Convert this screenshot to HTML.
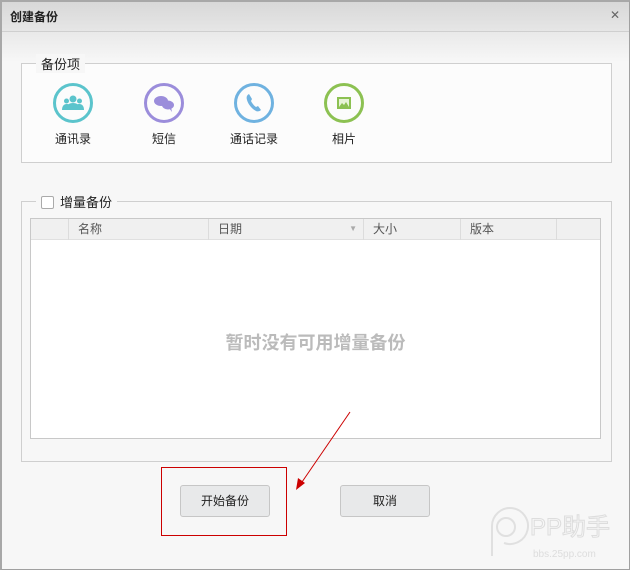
<!DOCTYPE html>
<html><head><meta charset="utf-8"><style>
*{margin:0;padding:0;box-sizing:border-box}
body{width:630px;height:570px;position:relative;overflow:hidden;background:#f7f7f7;font-family:"Liberation Sans","Noto Sans CJK SC",sans-serif;font-size:12px;color:#222}
.frame{position:absolute;left:0;top:0;width:630px;height:570px;border:1px solid #a0a0a0;border-left:2px solid #a8a8a8;border-top:2px solid #a8a8a8}
.title{position:absolute;left:2px;top:2px;right:1px;height:30px;background:linear-gradient(#d8d8d8,#e6e6e6);border-bottom:1px solid #cfcfcf}
.title span{position:absolute;left:8px;top:6px;font-size:12px;font-weight:bold}
.title .x{left:auto;right:9px;top:6px;font-weight:normal;font-size:12px;color:#666}
.grad{position:absolute;left:2px;top:32px;right:1px;height:30px;background:linear-gradient(#e9e9e9,#f7f7f7)}
.box{position:absolute;border:1px solid #cfcfcf;background:#fff}
.leg{position:absolute;background:#f7f7f7;font-size:13px;padding:0 5px}
.ic{position:absolute;width:40px;height:40px;border-radius:50%;border:3px solid}
.lbl{position:absolute;width:80px;text-align:center;font-size:12px}
.tbl{position:absolute;left:30px;top:218px;width:571px;height:221px;border:1px solid #c8c8c8;background:#fff}
.hd{position:absolute;left:0;top:0;width:100%;height:21px;background:#f0f0f0;border-bottom:1px solid #e0e0e0}
.c{position:absolute;top:0;height:21px;border-left:1px solid #dcdcdc;padding-left:9px;line-height:20px;color:#555}
.btn{position:absolute;width:90px;height:32px;border:1px solid #c6c6c6;border-radius:3px;background:#e8e9ea;text-align:center;line-height:30px;font-size:12px}
</style></head><body>
<div class="frame"></div>
<div class="title"><span>创建备份</span><span class="x">✕</span></div>
<div class="grad"></div>
<div class="box" style="left:21px;top:63px;width:591px;height:100px;background:#fcfcfc"></div>
<div class="leg" style="left:36px;top:54px">备份项</div>
<div class="ic" style="left:53px;top:83px;border-color:#5bc4cc"><svg width="34" height="34" viewBox="0 0 34 34"><g fill="#5bc4cc"><circle cx="17" cy="13" r="3.5"/><path d="M10 24c0-5 3-7 7-7s7 2 7 7z"/><circle cx="10.5" cy="15" r="2.5"/><path d="M6 24c0-4 2-6 4.5-6s3 1 3 2v4z"/><circle cx="23.5" cy="15" r="2.5"/><path d="M28 24c0-4-2-6-4.5-6s-3 1-3 2v4z"/></g></svg></div>
<div class="ic" style="left:144px;top:83px;border-color:#9b8ddb"><svg width="34" height="34" viewBox="0 0 34 34"><g fill="#9b8ddb"><ellipse cx="14" cy="15" rx="7" ry="5"/><ellipse cx="21" cy="19" rx="6" ry="4.5"/><path d="M22 22l3 4-1-5z"/></g></svg></div>
<div class="ic" style="left:234px;top:83px;border-color:#6fb2e0"><svg width="34" height="34" viewBox="0 0 34 34"><path d="M12 8c-2 1-3 3-2 6 1 4 5 9 9 11 2 1 4 0 5-1l-3-4-2 1c-2-1-4-4-5-6l1-2z" fill="#6fb2e0"/></svg></div>
<div class="ic" style="left:324px;top:83px;border-color:#8cc152"><svg width="34" height="34" viewBox="0 0 34 34"><rect x="10" y="11" width="14" height="12" fill="#8cc152"/><rect x="12" y="13" width="10" height="8" fill="#e8f4d8"/><path d="M12 21l3-4 2 2 2-3 3 5z" fill="#8cc152"/></svg></div>
<div class="lbl" style="left:33px;top:130px">通讯录</div>
<div class="lbl" style="left:124px;top:130px">短信</div>
<div class="lbl" style="left:214px;top:130px">通话记录</div>
<div class="lbl" style="left:304px;top:130px">相片</div>
<div class="box" style="left:21px;top:201px;width:591px;height:261px;background:#f7f7f7"></div>
<div class="leg" style="left:36px;top:192px;padding-left:5px"><span style="display:inline-block;width:13px;height:13px;border:1px solid #aaa;background:#fff;vertical-align:-2px;margin-right:6px;border-radius:2px"></span>增量备份</div>
<div class="tbl"><div class="hd">
<div class="c" style="left:37px;width:140px">名称</div>
<div class="c" style="left:177px;width:155px">日期<span style="position:absolute;right:6px;color:#aaa;font-size:8px">▼</span></div>
<div class="c" style="left:332px;width:97px">大小</div>
<div class="c" style="left:429px;width:96px">版本</div>
<div class="c" style="left:525px;width:46px"></div>
</div>
<div style="position:absolute;left:0;width:100%;top:110px;text-align:center;font-size:18px;font-weight:bold;color:#bbb">暂时没有可用增量备份</div></div>
<div class="btn" style="left:180px;top:485px">开始备份</div>
<div class="btn" style="left:340px;top:485px">取消</div>
<div style="position:absolute;left:161px;top:467px;width:126px;height:69px;border:1px solid #c00"></div>
<svg style="position:absolute;left:0;top:0" width="630" height="570"><line x1="350" y1="412" x2="302" y2="482" stroke="#c00" stroke-width="1"/><path d="M296 490l2-12 7 5z" fill="#c00"/>
<g fill="none" stroke="#e0e0e0" stroke-width="2"><path d="M492 556v-30a18 18 0 1 1 12 17"/><circle cx="506" cy="527" r="9"/></g>
<text x="530" y="535" font-size="24" fill="none" stroke="#ddd" font-family="Liberation Sans,Noto Sans CJK SC,sans-serif">PP助手</text>
<text x="533" y="557" font-size="10" fill="#ddd" font-family="Liberation Sans,sans-serif">bbs.25pp.com</text></svg>
</body></html>
